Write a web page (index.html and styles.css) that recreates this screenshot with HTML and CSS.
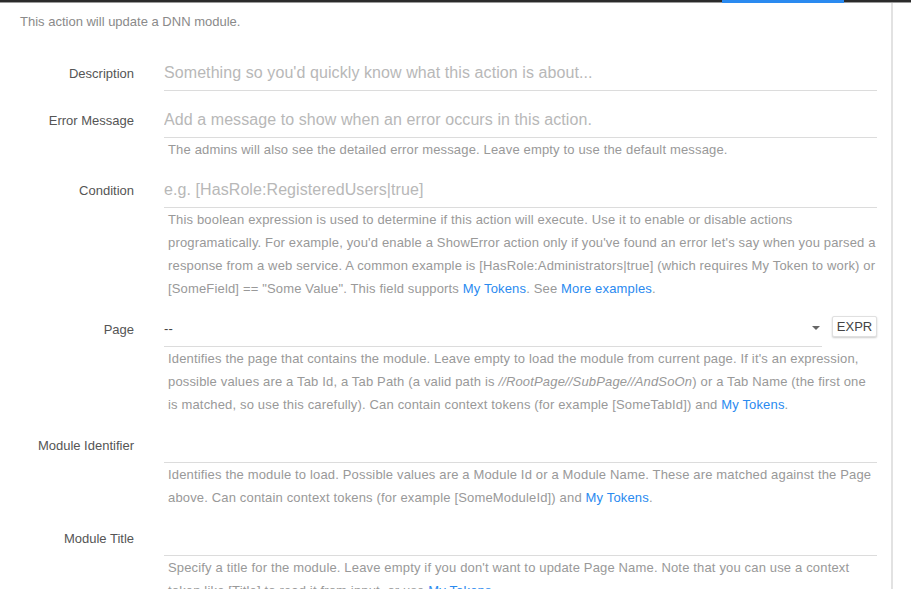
FILE: index.html
```html
<!DOCTYPE html>
<html>
<head>
<meta charset="utf-8">
<link rel="stylesheet" href="styles.css">
</head>
<body>
<div class="topbar"><div class="tab-indicator"></div></div>
<div class="layout">
  <div class="panel">
    <p class="intro">This action will update a DNN module.</p>
    <div class="form">
      <div class="group">
        <label class="label">Description</label>
        <div class="control">
          <div class="input placeholder">Something so you'd quickly know what this action is about...</div>
        </div>
      </div>
      <div class="group">
        <label class="label">Error Message</label>
        <div class="control">
          <div class="input placeholder">Add a message to show when an error occurs in this action.</div>
          <div class="help">The admins will also see the detailed error message. Leave empty to use the default message.</div>
        </div>
      </div>
      <div class="group">
        <label class="label">Condition</label>
        <div class="control">
          <div class="input placeholder">e.g. [HasRole:RegisteredUsers|true]</div>
          <div class="help">This boolean expression is used to determine if this action will execute. Use it to enable or disable actions programatically. For example, you'd enable a ShowError action only if you've found an error let's say when you parsed a response from a web service. A common example is [HasRole:Administrators|true] (which requires My Token to work) or [SomeField] == "Some Value". This field supports <a class="link">My Tokens</a>. See <a class="link">More examples</a>.</div>
        </div>
      </div>
      <div class="group">
        <label class="label">Page</label>
        <div class="control">
          <div class="select-row">
            <div class="input select"><span class="value">--</span><span class="caret"></span></div>
            <button class="btn-expr">EXPR</button>
          </div>
          <div class="help">Identifies the page that contains the module. Leave empty to load the module from current page. If it's an expression, possible values are a Tab Id, a Tab Path (a valid path is <em>//RootPage//SubPage//AndSoOn</em>) or a Tab Name (the first one is matched, so use this carefully). Can contain context tokens (for example [SomeTabId]) and <a class="link">My Tokens</a>.</div>
        </div>
      </div>
      <div class="group">
        <label class="label">Module Identifier</label>
        <div class="control">
          <div class="input"></div>
          <div class="help">Identifies the module to load. Possible values are a Module Id or a Module Name. These are matched against the Page above. Can contain context tokens (for example [SomeModuleId]) and <a class="link">My Tokens</a>.</div>
        </div>
      </div>
      <div class="group">
        <label class="label">Module Title</label>
        <div class="control">
          <div class="input"></div>
          <div class="help">Specify a title for the module. Leave empty if you don't want to update Page Name. Note that you can use a context token like [Title] to read it from input, or use <a class="link">My Tokens</a>.</div>
        </div>
      </div>
    </div>
  </div>
  <div class="aside"></div>
</div>
</body>
</html>
```
FILE: styles.css
```css
html, body {
  margin: 0;
  padding: 0;
  background: #fff;
  font-family: "Liberation Sans", Arial, sans-serif;
  overflow: hidden;
}

.topbar {
  height: 2px;
  background: #2b2b2b;
  border-bottom: 1px solid #9a9a9a;
  padding-left: 722px;
}

.tab-indicator {
  width: 122px;
  height: 3px;
  background: #2a8af0;
}

.layout {
  display: flex;
}

.panel {
  width: 857px;
  padding: 9px 14px 0 20px;
  border-right: 2px solid #e2e2e2;
  min-height: 600px;
}

.aside {
  flex: 1;
}

.intro {
  margin: 0 0 23px;
  font-size: 13px;
  line-height: 20px;
  color: #8a8a8a;
}

.form {
  display: flex;
  flex-direction: column;
  gap: 11px;
}

.group {
  display: grid;
  grid-template-columns: 114px 1fr;
  column-gap: 30px;
  align-items: start;
}

.label {
  text-align: right;
  font-size: 13px;
  line-height: 35px;
  padding-top: 1px;
  color: #555;
}

.control {
  display: flex;
  flex-direction: column;
}

.input {
  height: 35px;
  border-bottom: 1px solid #dcdcdc;
  font-size: 16px;
  line-height: 35px;
  letter-spacing: 0.08px;
  color: #444;
  white-space: nowrap;
  overflow: hidden;
}

.placeholder {
  color: #b8b8b8;
}

.select-row {
  display: flex;
  align-items: center;
  gap: 10px;
}

.select {
  flex: 1;
  display: flex;
  align-items: center;
  justify-content: space-between;
  font-size: 13px;
  padding-right: 2px;
}

.caret {
  width: 0;
  height: 0;
  border-left: 4px solid transparent;
  border-right: 4px solid transparent;
  border-top: 4px solid #666;
  margin-bottom: 2px;
}

.btn-expr {
  width: 45px;
  height: 21px;
  padding: 0;
  margin-bottom: 5px;
  border: 1px solid #e0e0e0;
  border-radius: 2px;
  background: #fff;
  box-shadow: 0 1px 2px rgba(0, 0, 0, 0.2);
  font-family: "Liberation Sans", Arial, sans-serif;
  font-size: 13px;
  color: #444;
}

.help {
  padding-left: 4px;
  font-size: 13px;
  line-height: 23px;
  letter-spacing: 0.16px;
  color: #999;
}

.link {
  color: #2a8af0;
  text-decoration: none;
}
```
